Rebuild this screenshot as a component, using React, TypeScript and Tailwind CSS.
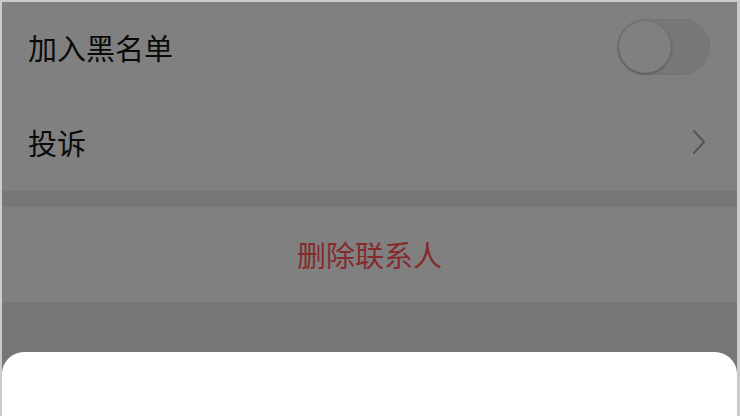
export default function App() {
  return (
    <div
      className="w-[740px] h-[416px] bg-[#cbcbcb] pt-[2px] pl-[2px] pr-[3px] overflow-hidden"
      style={{ fontFamily: '"Noto Sans CJK SC", "Noto Sans", sans-serif' }}
    >
      <div className="flex flex-col h-full bg-[#767676]">
        {/* Blacklist row */}
        <div className="flex items-center justify-between h-[90px] bg-[#808080] pl-[26px] pr-[27px]">
          <span className="text-[29px] text-[#0a0a0a] leading-none">加入黑名单</span>
          <div className="relative w-[93px] h-[56px] rounded-full bg-[#787878] border border-[#747474]">
            <div className="absolute left-[1px] top-[1px] w-[52px] h-[52px] rounded-full bg-[#808080] shadow-[0_1px_3px_rgba(0,0,0,0.35)]" />
          </div>
        </div>
        <div className="bg-[#808080] pl-[28px]">
          <div className="h-px bg-[#7a7a7a]" />
        </div>

        {/* Complaint row */}
        <div className="flex items-center justify-between h-[98px] bg-[#808080] pl-[26px] pr-[31px]">
          <span className="text-[29px] text-[#0a0a0a] leading-none">投诉</span>
          <svg width="14" height="26" viewBox="0 0 14 26" fill="none">
            <path d="M2 2 L12 13 L2 24" stroke="#555555" strokeWidth="2" strokeLinecap="round" strokeLinejoin="round" />
          </svg>
        </div>

        <div className="h-[16px] bg-[#777777]" />

        {/* Delete contact */}
        <div className="flex items-center justify-center h-[95px] bg-[#808080]">
          <span className="text-[29px] text-[#862a2c] leading-none">删除联系人</span>
        </div>

        <div className="h-[50px]" />

        {/* Bottom sheet */}
        <div className="flex-1 bg-white rounded-t-[22px]" />
      </div>
    </div>
  )
}
